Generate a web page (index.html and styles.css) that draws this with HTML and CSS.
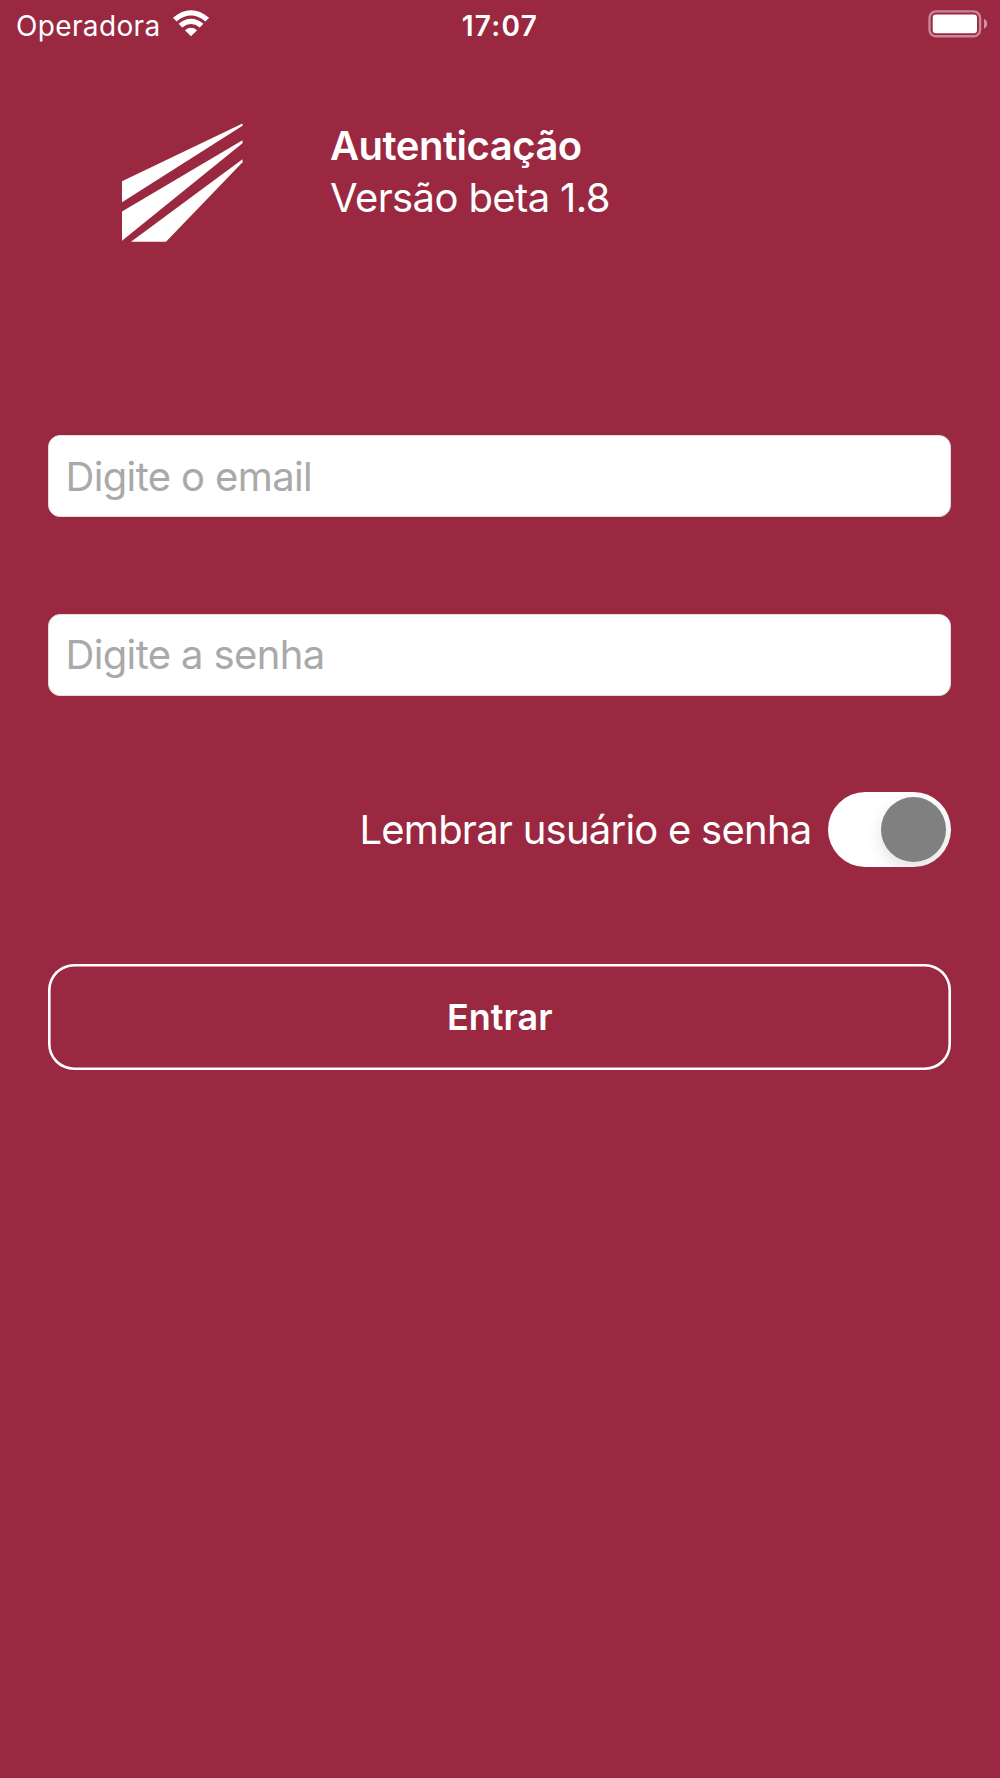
FILE: index.html
```html
<!DOCTYPE html>
<html lang="pt-BR">
<head>
    <meta charset="UTF-8">
    <meta name="viewport" content="width=device-width, initial-scale=1.0">
    <title>Autenticação</title>
    <link rel="stylesheet" href="styles.css">
</head>
<body>
    <div class="status">
        <div class="carrier">
            <span class="carrier-name">Operadora</span>
            <svg class="wifi" width="38" height="28" viewBox="0 0 38 28">
                <path d="M.9 7.7Q19-7.2 37.1 7.7L33.4 11.5Q19-.4 4.6 11.5Z"/>
                <path d="M6.6 13.8Q19 3.8 31.4 13.8L27.7 17.5Q19 10.6 10.3 17.5Z"/>
                <path d="M12.9 20.2Q19 15.4 25.1 20.2L19 26.2Z"/>
            </svg>
        </div>
        <span class="time">17:07</span>
        <svg class="battery" width="60" height="28" viewBox="0 0 60 28">
            <rect class="battery-case" x="1.5" y="1.4" width="50.6" height="24.8" rx="6.5"/>
            <rect x="4.7" y="4.6" width="44.3" height="18.6" rx="3.3"/>
            <path class="battery-tip" d="M56 8.8Q59.2 10.5 59.2 13.8Q59.2 17.1 56 18.8Z"/>
        </svg>
    </div>

    <div class="header">
        <svg class="logo" width="121" height="120" viewBox="0 0 121 120">
            <path d="M0 59.2L120.5 1.4V3.8L0 80.3Z"/>
            <path d="M0 89.4L120.5 18.2V21.2L0 118.8Z"/>
            <path d="M9 119.7L120.5 37.2V40.2L44 119.7Z"/>
        </svg>
        <div>
            <p class="title">Autenticação</p>
            <p class="version">Versão beta 1.8</p>
        </div>
    </div>

    <form class="login">
        <input class="email" type="email" placeholder="Digite o email">
        <input class="password" type="password" placeholder="Digite a senha">
        <label class="remember">
            <span class="remember-text">Lembrar usuário e senha</span>
            <span class="switch"><span class="knob"></span></span>
        </label>
        <button type="button">Entrar</button>
    </form>
</body>
</html>
```

FILE: styles.css
```css
* {
    box-sizing: border-box;
}
body {
    margin: 0;
    height: 1778px;
    background-color: #9a2841;
    color: #fff;
    font-family: Inter, "Liberation Sans", sans-serif;
    font-size: 40px;
}
p {
    margin: 0;
}
svg {
    display: block;
    fill: #fff;
}
.status {
    display: grid;
    grid-template-columns: 1fr auto 1fr;
    align-items: center;
    height: 50px;
    padding: 0 12px;
    font-size: 28px;
}
.carrier {
    display: flex;
    align-items: center;
    gap: 12px;
    padding-left: 4px;
}
.carrier-name {
    width: 144px;
    padding-top: 1px;
    white-space: nowrap;
    letter-spacing: 0.35px;
}
.wifi {
    margin-bottom: 2px;
}
.time {
    padding-top: 1px;
    font-weight: 600;
    letter-spacing: 1.3px;
}
.battery {
    justify-self: end;
    margin-bottom: 2px;
}
.battery-case {
    fill: none;
    stroke: rgba(255, 255, 255, 0.45);
    stroke-width: 2.4;
}
.battery-tip {
    fill: rgba(255, 255, 255, 0.5);
}
.header {
    display: flex;
    gap: 87.5px;
    padding: 70px 0 0 121.5px;
    line-height: 52px;
}
.logo {
    margin-top: 2px;
}
.title {
    font-weight: 600;
    letter-spacing: -0.5px;
}
.version {
    letter-spacing: -0.62px;
}
.login {
    display: flex;
    flex-direction: column;
    padding: 0 49px 0 48.4px;
    margin-top: 193px;
}
input {
    width: 100%;
    height: 82px;
    margin-bottom: 96.5px;
    padding: 0 16px;
    border: 1px solid #ddd;
    border-radius: 12px;
    background-color: #fff;
    font: inherit;
    letter-spacing: -0.62px;
}
input::placeholder {
    color: #a9a9a9;
}
.remember {
    display: flex;
    justify-content: flex-end;
    align-items: center;
    gap: 16px;
}
.remember-text {
    letter-spacing: -0.76px;
}
.switch {
    display: flex;
    justify-content: flex-end;
    width: 123.5px;
    height: 75px;
    padding: 5px;
    border-radius: 38px;
    background-color: #fff;
    overflow: hidden;
}
.knob {
    width: 65px;
    height: 65px;
    border-radius: 50%;
    background-color: #808080;
    box-shadow: 0 6px 16px rgba(0, 0, 0, 0.12);
}
button {
    height: 106.5px;
    margin-top: 96.5px;
    padding: 0;
    border: none;
    border-radius: 26px;
    box-shadow: inset 0 0 0 2.6px #fff;
    background: none;
    color: #fff;
    font: inherit;
    font-size: 36px;
    font-weight: 600;
}
```
